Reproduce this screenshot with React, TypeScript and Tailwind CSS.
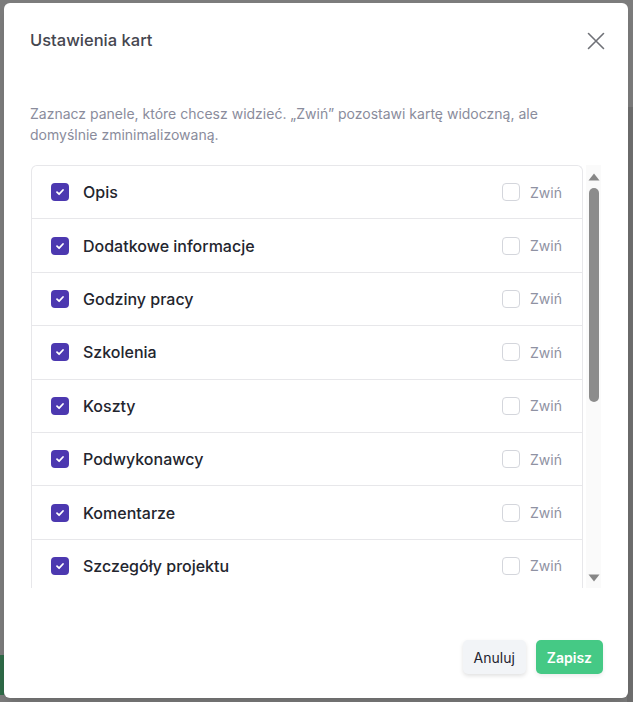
import React from "react";

const items = [
  "Opis",
  "Dodatkowe informacje",
  "Godziny pracy",
  "Szkolenia",
  "Koszty",
  "Podwykonawcy",
  "Komentarze",
  "Szczegóły projektu",
  "Załączniki",
  "Historia zmian",
];

function Row({ label }: { label: string }) {
  return (
    <div className="flex h-[53.4px] shrink-0 items-center border-b border-[#e7e7ea] pl-[19px] pr-[20px]">
      <div className="flex h-[18px] w-[18px] items-center justify-center rounded-[4px] bg-[#4c38b0]">
        <svg width="10" height="10" viewBox="0 0 10 10" fill="none">
          <path d="M2 5.2L4.1 7.2L8 3" stroke="white" strokeWidth="1.8" strokeLinecap="round" strokeLinejoin="round" />
        </svg>
      </div>
      <span className="ml-[14px] flex-1 text-[16px] font-medium text-[#23252e]">{label}</span>
      <div className="h-[18px] w-[18px] rounded-[4px] border border-[#d4d6dc] bg-white" />
      <span className="ml-[10px] text-[14px] font-normal text-[#8f92a3]">Zwiń</span>
    </div>
  );
}

export default function App() {
  return (
    <div
      className="relative h-[702px] w-[633px] overflow-hidden bg-[#7c7c7c]"
      style={{ fontFamily: "Inter, 'Noto Sans', sans-serif" }}
    >
      <div className="absolute right-0 top-[107px] h-[595px] w-[6px] bg-[#6f6f6f]" />
      <div className="absolute left-0 top-[655px] h-[40px] w-[4px] bg-[#2f6b48]" />
      <div className="absolute left-[4px] top-[3px] flex h-[695px] w-[624px] flex-col rounded-[6px] bg-white pl-[26px] pr-[27px] shadow-lg">
        <div className="flex h-[75px] items-center justify-between">
          <h2 className="text-[16.5px] font-medium text-[#45464f]">Ustawienia kart</h2>
          <svg width="20" height="20" viewBox="0 0 20 20" className="mr-[-5px]" fill="none">
            <path d="M2.5 2.5L17.5 17.5M17.5 2.5L2.5 17.5" stroke="#6f7177" strokeWidth="1.6" strokeLinecap="round" />
          </svg>
        </div>
        <p className="mt-[25px] text-[14px] leading-[21px] text-[#8a8c9c]">
          Zaznacz panele, które chcesz widzieć. „Zwiń” pozostawi kartę widoczną, ale domyślnie zminimalizowaną.
        </p>
        <div className="mt-[20px] ml-[1px] flex h-[423px] gap-[3px] overflow-hidden">
          <div className="flex flex-1 flex-col rounded-t-[6px] border border-b-0 border-[#e7e7ea]">
            {items.map((it) => (
              <Row key={it} label={it} />
            ))}
          </div>
          <div className="flex w-[15px] flex-col items-center bg-[#fafafa] pt-[8px] pb-[6px]">
            <svg width="12" height="8" viewBox="0 0 12 8">
              <path d="M6 0.5L11.5 7.5H0.5Z" fill="#878787" />
            </svg>
            <div className="mt-[7px] h-[214px] w-[10px] rounded-full bg-[#8c8c8c]" />
            <div className="flex-1" />
            <svg width="12" height="8" viewBox="0 0 12 8">
              <path d="M0.5 0.5H11.5L6 7.5Z" fill="#878787" />
            </svg>
          </div>
        </div>
        <div className="mt-auto mb-[24px] flex justify-end gap-[10px]">
          <button className="h-[34px] rounded-[5px] bg-[#f2f4f7] px-[11px] text-[14px] font-normal text-[#1f2430] shadow-[0_2px_4px_rgba(0,0,0,0.12)]">
            Anuluj
          </button>
          <button className="mr-[-2px] h-[34px] rounded-[5px] bg-[#45c985] px-[11px] text-[14px] font-semibold text-white shadow-[0_2px_4px_rgba(0,0,0,0.08)]">
            Zapisz
          </button>
        </div>
      </div>
    </div>
  );
}
